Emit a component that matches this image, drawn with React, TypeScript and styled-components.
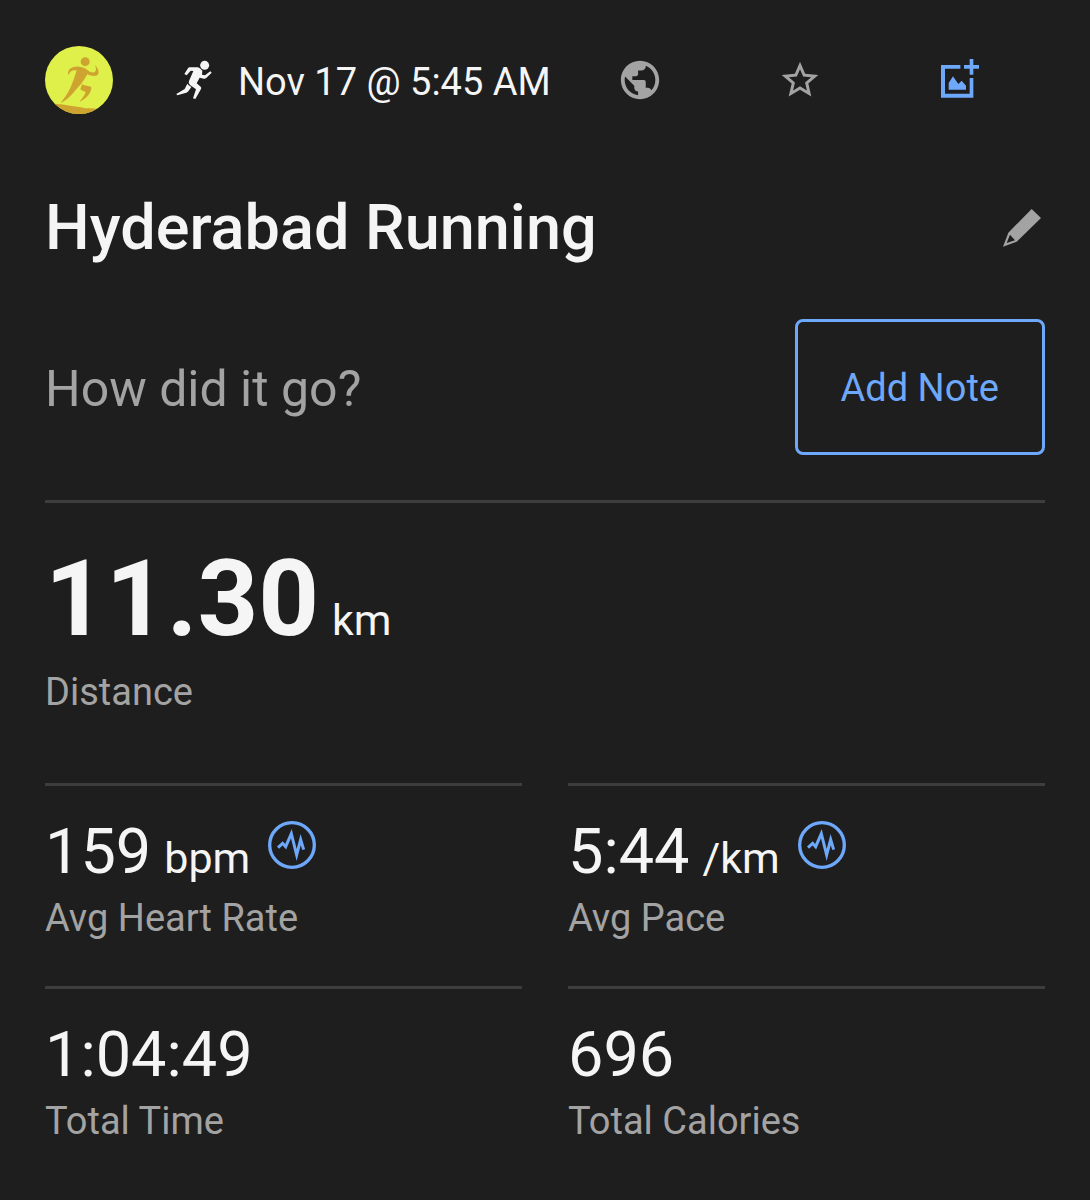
import React from "react";
import styled, { createGlobalStyle } from "styled-components";

const color = {
  surface: "#1e1e1e",
  text: "#f5f5f5",
  muted: "#a3a3a3",
  accent: "#6ea8fa",
  line: "#3d3d3d",
};

const GlobalStyle = createGlobalStyle`
  *, *::before, *::after { box-sizing: border-box; }
  body {
    margin: 0;
    background: ${color.surface};
    color: ${color.text};
    font-family: Roboto, "Liberation Sans", sans-serif;
  }
  h1, p, dl, dt, dd { margin: 0; }
  svg { display: block; }
`;

const Page = styled.main`
  min-height: 100vh;
  padding: 46px 45px;
`;

const Header = styled.header`
  display: flex;
  align-items: center;
  padding-right: 5px;
`;

const ActivityInfo = styled.div`
  flex: 1;
  min-width: 0;
  display: flex;
  align-items: center;
`;

const RunMark = styled.span`
  margin: 0 25px 0 62px;
`;

const DateText = styled.time`
  padding-top: 4px;
  font-size: 38px;
  line-height: 45px;
  white-space: nowrap;
`;

const IconButton = styled.button<{ $width?: number; $tone?: string }>`
  flex: none;
  display: flex;
  justify-content: center;
  align-items: center;
  width: ${(p) => (p.$width ? `${p.$width}px` : "auto")};
  padding: 0;
  border: 0;
  background: none;
  color: ${(p) => p.$tone ?? color.muted};
  cursor: pointer;
`;

const TitleRow = styled.div`
  display: flex;
  justify-content: space-between;
  align-items: center;
  margin-top: 77px;
`;

const Title = styled.h1`
  font-size: 63px;
  line-height: 74px;
  font-weight: 500;
`;

const NoteRow = styled.section`
  display: flex;
  justify-content: space-between;
  align-items: center;
  margin-top: 54px;
  padding-bottom: 45px;
`;

const Prompt = styled.p`
  padding-top: 4px;
  font-size: 50px;
  line-height: 60px;
  color: ${color.muted};
`;

const NoteButton = styled.button`
  height: 136px;
  padding: 2px 43px 0;
  border: 3px solid ${color.accent};
  border-radius: 8px;
  background: none;
  color: ${color.accent};
  font-family: inherit;
  font-size: 38px;
  line-height: 45px;
  cursor: pointer;
`;

const Stats = styled.dl`
  display: grid;
  grid-template-columns: 1fr 1fr;
  column-gap: 46px;
`;

const Stat = styled.div<{ $wide?: boolean }>`
  grid-column: ${(p) => (p.$wide ? "1 / -1" : "auto")};
  display: flex;
  flex-direction: column-reverse;
  gap: ${(p) => (p.$wide ? 8 : 7)}px;
  padding: ${(p) => (p.$wide ? "34px 0 68px" : "29px 0 45px")};
  border-top: 3px solid ${color.line};
`;

const StatLabel = styled.dt`
  font-size: 38px;
  line-height: 45px;
  color: ${color.muted};
`;

const StatValue = styled.dd`
  display: flex;
  align-items: center;
  gap: 18px;
`;

const Figure = styled.span<{ $large?: boolean }>`
  font-size: ${(p) => (p.$large ? 106 : 63)}px;
  line-height: ${(p) => (p.$large ? 125 : 74)}px;
  font-weight: ${(p) => (p.$large ? 700 : 400)};
  white-space: nowrap;
`;

const Unit = styled.span`
  margin-left: 13px;
  font-size: 43px;
  line-height: 1;
  font-weight: 400;
`;

const ChartButton = styled(IconButton)`
  margin-bottom: 15px;
`;

const Avatar = () => (
  <svg width="68" height="68" viewBox="30 33 204 204" role="img" aria-label="Profile">
    <defs>
      <clipPath id="avatar-disc">
        <circle cx="132" cy="135" r="102" />
      </clipPath>
    </defs>
    <g clipPath="url(#avatar-disc)">
      <rect x="30" y="33" width="204" height="204" fill="#dff04a" />
      <g fill="#cfa32f">
        <path d="M55 206Q85 207 110 213Q135 215 150 220Q180 218 215 226V240H55Z" />
        <circle cx="150.500" cy="80" r="13.500" />
        <path d="M101 121C95 106 107 96 122 95C134 94 146 97 153 102C161 109 171 115 178 112C185 108 184 99 179 90C188 97 193 109 190 116C186 125 172 124 157 118C152 127 146 137 138 147C128 158 118 170 109 180C99 191 88 199 77 204C87 191 97 177 104 163C111 149 119 127 125 106C113 104 103 109 101 121Z" />
        <path d="M141 148C151 153 160 152 169 156C170 172 157 190 133 201C142 190 149 181 152 172C147 169 141 167 136 163Z" />
      </g>
    </g>
  </svg>
);

const Runner = () => (
  <svg width="38" height="40" viewBox="419 75 114 120" fill={color.text} aria-hidden="true">
    <circle cx="508" cy="91" r="13.5" />
    <path d="M462 97L486 97Q492 98 496 102L501 107L500 119L509 121L525 109L529 113L512 130Q509 132 505 131L493 128L484 145L496 155Q499 158 497 162L480 192L473 190L482 163L464 150Q458 144 461 138L474 108L466 107L454 121L447 117L458 100Q460 97 462 97Z" />
    <path d="M456 146L460 151L468 156L459 169Q457 172 453 173L426 181L423 177L448 162Z" />
  </svg>
);

const Globe = () => (
  <svg width="46" height="46" viewBox="0 0 24 24" fill="currentColor" aria-hidden="true">
    <path d="M12 2C6.48 2 2 6.48 2 12s4.480 10 10 10 10-4.480 10-10S17.520 2 12 2zm-1 17.930c-3.950-.490-7-3.850-7-7.930 0-.620.080-1.210.210-1.790L9 15v1c0 1.100.900 2 2 2v1.930zm6.900-2.540c-.260-.810-1-1.390-1.900-1.390h-1v-3c0-.550-.450-1-1-1H8v-2h2c.550 0 1-.450 1-1V7h2c1.100 0 2-.900 2-2v-.410c2.930 1.190 5 4.060 5 7.410 0 2.080-.800 3.970-2.100 5.390z" />
  </svg>
);

const Star = () => (
  <svg width="44" height="44" viewBox="0 0 24 24" fill="currentColor" aria-hidden="true">
    <path d="M22 9.240l-7.190-.620L12 2 9.190 8.630 2 9.240l5.460 4.730L5.820 21 12 17.270 18.180 21l-1.630-7.030L22 9.240zM12 15.400l-3.760 2.270 1-4.280-3.320-2.880 4.380-.380L12 6.100l1.710 4.040 4.380.380-3.320 2.880 1 4.280L12 15.400z" />
  </svg>
);

const AddImage = () => (
  <svg width="44" height="44" viewBox="54 24 132 132" fill="currentColor" aria-hidden="true">
    <path d="M63 45H121V56H75V131H149V84H160V143H63Z" />
    <path d="M149 27H160V45H177V56H160V74H149V56H132V45H149Z" />
    <path d="M86 119V99L99 79L115 102L125 92L138 107V119Z" />
  </svg>
);

const Pencil = () => (
  <svg width="46" height="46" viewBox="57 45 138 138" aria-hidden="true">
    <path
      fill="currentColor"
      fillRule="evenodd"
      d="M155 57L183 84L110 155L69 170L85 128ZM90 134L80 159L105 151Z"
    />
  </svg>
);

const Waveform = () => (
  <svg width="48" height="48" viewBox="39 32 144 144" fill="none" stroke="currentColor" aria-hidden="true">
    <circle cx="111" cy="104" r="67" strokeWidth="10" />
    <path
      d="M69 112L83 99L92 109L109 70L125 134L137 88L146 118"
      strokeWidth="9"
      strokeLinejoin="miter"
      strokeMiterlimit="10"
    />
  </svg>
);

type StatItem = {
  label: string;
  value: string;
  unit?: string;
  chart?: boolean;
  large?: boolean;
};

const stats: StatItem[] = [
  { label: "Distance", value: "11.30", unit: "km", large: true },
  { label: "Avg Heart Rate", value: "159", unit: "bpm", chart: true },
  { label: "Avg Pace", value: "5:44", unit: "/km", chart: true },
  { label: "Total Time", value: "1:04:49" },
  { label: "Total Calories", value: "696" },
];

export default function App() {
  return (
    <>
      <GlobalStyle />
      <Page>
        <Header>
          <ActivityInfo>
            <Avatar />
            <RunMark>
              <Runner />
            </RunMark>
            <DateText>Nov 17 @ 5:45 AM</DateText>
          </ActivityInfo>
          <IconButton $width={160} aria-label="Privacy">
            <Globe />
          </IconButton>
          <IconButton $width={160} aria-label="Favorite">
            <Star />
          </IconButton>
          <IconButton $width={160} $tone={color.accent} aria-label="Add photo">
            <AddImage />
          </IconButton>
        </Header>

        <TitleRow>
          <Title>Hyderabad Running</Title>
          <IconButton aria-label="Edit title">
            <Pencil />
          </IconButton>
        </TitleRow>

        <NoteRow>
          <Prompt>How did it go?</Prompt>
          <NoteButton>Add Note</NoteButton>
        </NoteRow>

        <Stats>
          {stats.map((s) => (
            <Stat key={s.label} $wide={s.large}>
              <StatLabel>{s.label}</StatLabel>
              <StatValue>
                <Figure $large={s.large}>
                  {s.value}
                  {s.unit && <Unit>{s.unit}</Unit>}
                </Figure>
                {s.chart && (
                  <ChartButton $tone={color.accent} aria-label={`${s.label} chart`}>
                    <Waveform />
                  </ChartButton>
                )}
              </StatValue>
            </Stat>
          ))}
        </Stats>
      </Page>
    </>
  );
}
